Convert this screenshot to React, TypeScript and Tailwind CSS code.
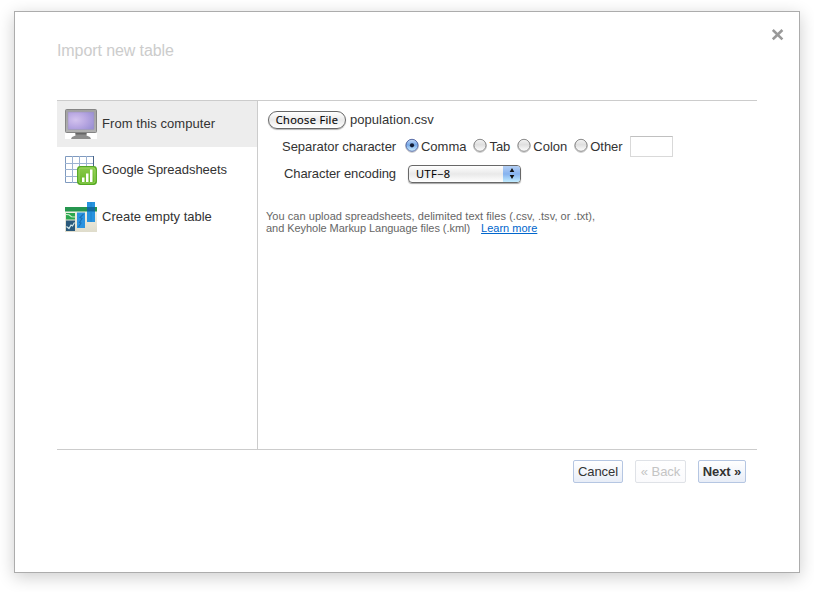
import React from "react";

function MonitorIcon() {
  return (
    <svg width="32" height="30" viewBox="0 0 32 30" className="block shrink-0">
      <defs>
        <linearGradient id="bezel" x1="0" y1="0" x2="0" y2="1">
          <stop offset="0" stopColor="#a2a2a2" />
          <stop offset="1" stopColor="#b2b2b2" />
        </linearGradient>
        <radialGradient id="screen" cx="0.3" cy="0.45" r="0.8">
          <stop offset="0" stopColor="#d3c3ee" />
          <stop offset="0.5" stopColor="#b9a8e2" />
          <stop offset="1" stopColor="#9a90d4" />
        </radialGradient>
      </defs>
      <path d="M0 24h32v6H0z" fill="#fff" />
      <rect x="0.5" y="0.5" width="31" height="23" rx="1" fill="url(#bezel)" stroke="#858585" />
      <rect x="3" y="3" width="26" height="17.5" fill="url(#screen)" stroke="#9a95b5" strokeWidth="0.5" />
      <path d="M10.5 24h11v2.5l3.5 1.5 1 2H6l1-2 3.5-1.5z" fill="#8c8c8c" />
      <path d="M10.5 24h11v1.5h-11z" fill="#666" />
    </svg>
  );
}

function SpreadsheetIcon() {
  return (
    <svg width="32" height="30" viewBox="0 0 32 30" className="block shrink-0">
      <defs>
        <linearGradient id="leaf" x1="0" y1="0" x2="0" y2="1">
          <stop offset="0" stopColor="#8ccb4c" />
          <stop offset="1" stopColor="#62b526" />
        </linearGradient>
      </defs>
      <path d="M0.5 0.5h28v26h-28z" fill="#fff" stroke="#7f9abf" />
      <path d="M7.5 0v27M14.5 0v27M21.5 0v27M0 7.5h29M0 13.5h29M0 20.5h29" stroke="#9db3d2" />
      <path d="M28.5 0v12" stroke="#496588" />
      <rect x="12.7" y="10.7" width="18.6" height="17.6" rx="2.8" fill="url(#leaf)" stroke="#55a823" strokeWidth="1.3" />
      <rect x="14" y="12" width="16" height="15" rx="1.8" fill="none" stroke="#a2d96a" strokeWidth="0.8" />
      <path d="M17 21.500h2.500V26H17zM21 17.500h2.500V26H21zM25 13.500h2.500V26H25z" fill="#fff" />
    </svg>
  );
}

function EmptyTableIcon() {
  return (
    <svg width="32" height="30" viewBox="0 0 32 30" className="block shrink-0">
      <defs>
        <linearGradient id="paper" x1="0" y1="0" x2="0" y2="1">
          <stop offset="0" stopColor="#f4f4ea" />
          <stop offset="1" stopColor="#dfdccb" />
        </linearGradient>
      </defs>
      <path d="M0 5h32v25H0z" fill="url(#paper)" />
      <path d="M0 5h32v4.5H0z" fill="#26964f" />
      <path d="M1 11h9v6.5H1z" fill="#2ca84f" />
      <path d="M1 18.5h9V29H1z" fill="#2a587a" />
      <path d="M1 12.5l3 .2 2.500 2 3.500.3" fill="none" stroke="#d5f0d5" strokeWidth="1.1" />
      <path d="M1.500 24.500l2.500 2 2-3.500 1.500 1 2-3.500" fill="none" stroke="#d3e9ec" strokeWidth="1.2" />
      <path d="M12 10.5h8V26h-8z" fill="#2b93e0" />
      <path d="M18.500 12l-3.500 3.500 2 1-2.500 4 1.500.5-2.500 4" fill="none" stroke="#1b70b5" strokeWidth="1.1" />
      <path d="M22 0h8v20h-8z" fill="#2793df" />
      <path d="M22 5h8v4.5h-8z" fill="#11699f" />
      <path d="M26 0v5M26 9.5V20" stroke="#1e84cd" />
    </svg>
  );
}

function SourceItem({ icon, label, selected }: { icon: React.ReactNode; label: string; selected?: boolean }) {
  return (
    <li className={`flex items-start gap-[5px] pl-2 ${selected ? "h-[46px] bg-[#ededed] pt-2" : "h-[46px] pt-[9px]"}`}>
      {icon}
      <span className={`leading-4 ${selected ? "pt-[7px] tracking-[0.07px]" : "pt-[6px] tracking-[-0.04px]"}`}>{label}</span>
    </li>
  );
}

function Radio({ label, checked }: { label: string; checked?: boolean }) {
  return (
    <label className="flex items-start gap-[2px]">
      <svg width="14" height="16" viewBox="0 0 14 16" className="block">
        <defs>
          <linearGradient id="radioOff" x1="0" y1="0" x2="0" y2="1">
            <stop offset="0" stopColor="#f4f4f4" />
            <stop offset="0.45" stopColor="#dfdfdf" />
            <stop offset="1" stopColor="#ffffff" />
          </linearGradient>
          <linearGradient id="radioOn" x1="0" y1="0" x2="0" y2="1">
            <stop offset="0" stopColor="#c9dcf6" />
            <stop offset="0.45" stopColor="#75a8e7" />
            <stop offset="1" stopColor="#d3f1ff" />
          </linearGradient>
        </defs>
        <circle cx="7" cy="8" r="6.3" fill="none" stroke="#bbb" strokeWidth="0.9" />
        <circle cx="7" cy="7.3" r="6" fill={checked ? "url(#radioOn)" : "url(#radioOff)"} stroke={checked ? "#4b60a0" : "#808080"} strokeWidth="0.9" />
        {checked && <circle cx="7" cy="7.3" r="2.1" fill="#111b33" />}
      </svg>
      <span className="pt-px">{label}</span>
    </label>
  );
}

export default function App() {
  return (
    <div className="h-[592px] w-[814px] overflow-hidden bg-white pt-[11px] pl-[14px] font-['Liberation_Sans',Arial,sans-serif] text-[13px] leading-4 text-[#333]">
      <div className="h-[562px] w-[786px] border border-[#acacac] bg-white shadow-[0_4px_16px_rgba(0,0,0,0.2)]">
        <header className="flex h-[88px] items-start justify-between pr-[15px] pl-[42px]">
          <h1 className="pt-[29px] text-base leading-5 tracking-[-0.09px] text-[#ccc]">Import new table</h1>
          <button aria-label="Close" className="mt-[17px]">
            <svg width="12" height="12" viewBox="0 0 12 12" className="block">
              <path d="M0.8 1l9.6 9.4M10.4 1L0.8 10.4" stroke="#999" strokeWidth="2.6" />
            </svg>
          </button>
        </header>

        <main className="ml-[42px] flex h-[350px] w-[700px] border-y border-[#ccc]">
          <ul className="w-[201px] border-r border-[#ccc]">
            <SourceItem icon={<MonitorIcon />} label="From this computer" selected />
            <SourceItem icon={<SpreadsheetIcon />} label="Google Spreadsheets" />
            <li className="flex h-[46px] items-start gap-[5px] pt-[9px] pl-2">
              <EmptyTableIcon />
              <span className="pt-[7px] leading-4">Create empty table</span>
            </li>
          </ul>

          <section className="flex-1 pt-[9px] pl-[8px]">
            <div className="flex h-5 items-center pl-[2px]">
              <button className="mr-1 h-[18px] w-[78px] rounded-full border border-[#686868] bg-linear-to-b from-white via-[#eaeaea] to-white font-['Open_Sans',sans-serif] text-[11px] leading-[16px] tracking-[0.35px] whitespace-nowrap text-black [-webkit-text-stroke:0.15px_black] shadow-[0_1px_1px_rgba(0,0,0,0.3)]">
                Choose File
              </button>
              <span className="tracking-[0.05px]">population.csv</span>
            </div>

            <div className="mt-[5px] flex h-[22px] items-center">
              <span className="w-[139px] pt-px pl-4 tracking-[-0.04px]">Separator character</span>
              <div className="flex w-[225px] items-center gap-[7px] tracking-[-0.02px]">
                <Radio label="Comma" checked />
                <Radio label="Tab" />
                <Radio label="Colon" />
                <Radio label="Other" />
              </div>
              <input aria-label="Other separator" className="h-[21px] w-[43px] border border-[#d9d9d9] border-t-[#c0c0c0]" />
            </div>

            <div className="mt-[6px] flex h-5 items-center pl-[18px]">
              <span className="w-[124px] pt-[2px] tracking-[-0.08px]">Character encoding</span>
              <button className="mt-px flex h-[18px] w-[113px] overflow-hidden rounded-[4px] border border-[#686868] bg-linear-to-b from-white via-[#e9e9e9] to-white text-black shadow-[0_1px_1px_rgba(0,0,0,0.35)]">
                <span className="flex-1 pl-[7px] text-left font-['Open_Sans',sans-serif] text-[11px] leading-[15px] tracking-[0.4px] [-webkit-text-stroke:0.15px_black]">UTF−8</span>
                <span className="flex h-full w-[17px] items-center justify-center bg-linear-to-b from-[#b4cff4] via-[#86b2ef] to-[#c2edff]">
                  <svg width="6" height="11" viewBox="0 0 6 11">
                    <path d="M3 0l2.3 4H.7zM3 11l2.3-4H.7z" fill="#111" />
                  </svg>
                </span>
              </button>
            </div>

            <p className="mt-[27px] text-[11px] leading-3 text-[#666]">
              <span className="tracking-[0.04px]">You can upload spreadsheets, delimited text files (.csv, .tsv, or .txt),</span>
              <br />
              <span className="tracking-[-0.05px]">and Keyhole Markup Language files (.kml)</span>
              <a className="ml-[11px] text-[#0066cc] underline">Learn more</a>
            </p>
          </section>
        </main>

        <footer className="flex justify-end gap-3 pt-[10px] pr-[53px]">
          <button className="h-[23px] w-[50px] rounded-[2px] border border-[#b5c6e2] bg-linear-to-b from-white to-[#e8edf7] tracking-[-0.05px]">Cancel</button>
          <button className="h-[23px] w-[51px] rounded-[2px] border border-[#dfe2e7] bg-linear-to-b from-white to-[#fafafc] whitespace-nowrap text-[#c4c4c4]">« Back</button>
          <button className="h-[23px] w-[48px] rounded-[2px] border border-[#b5c6e2] bg-linear-to-b from-white to-[#e8edf7] font-bold tracking-[-0.1px] whitespace-nowrap">Next »</button>
        </footer>
      </div>
    </div>
  );
}
